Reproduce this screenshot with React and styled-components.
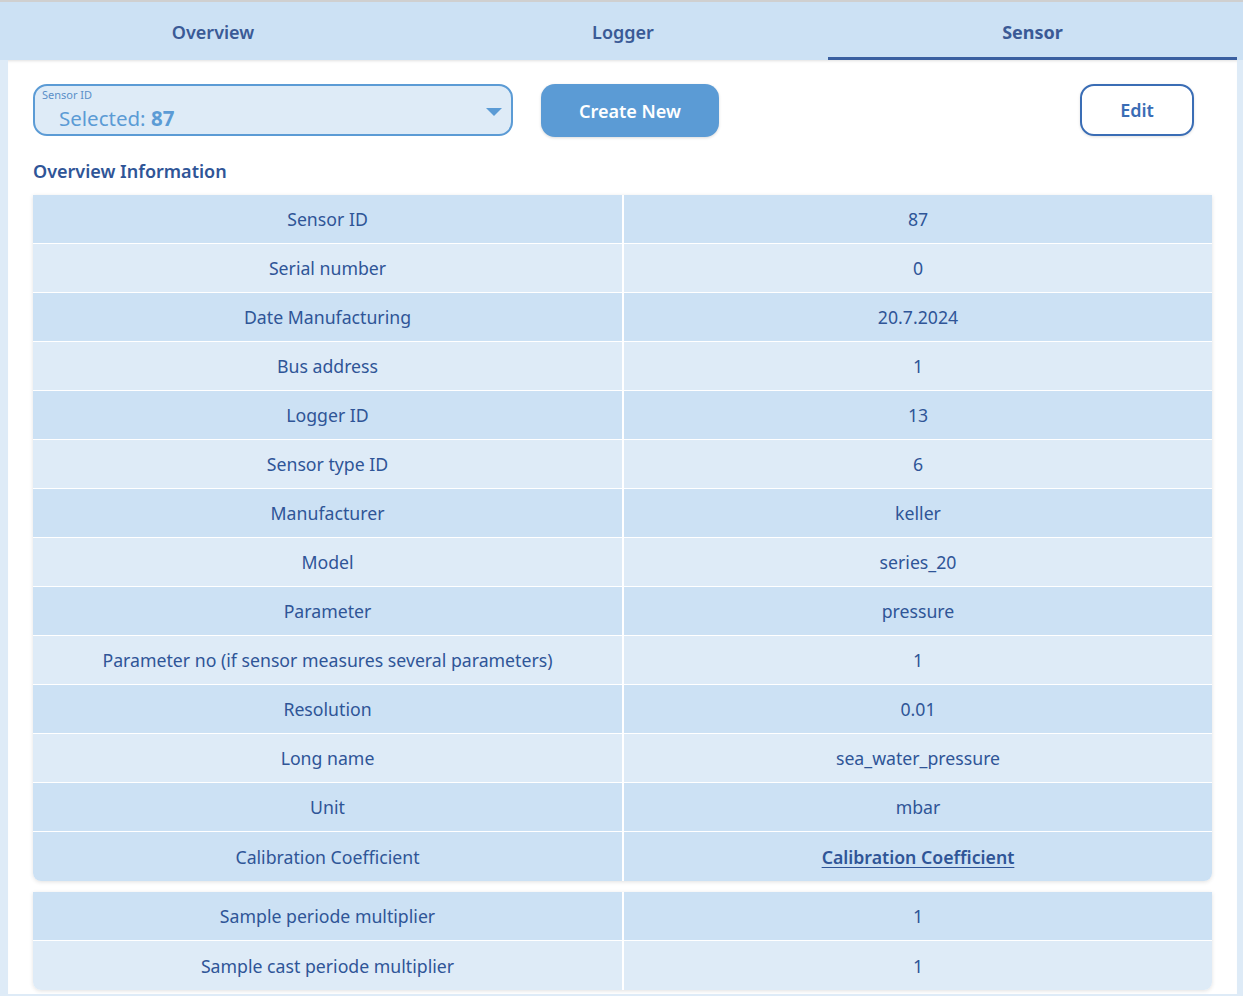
import React from "react";
import styled, { createGlobalStyle } from "styled-components";

const Global = createGlobalStyle`
  html, body { margin: 0; padding: 0; background: #deebf7; }
  body { font-family: "Noto Sans", "Open Sans", sans-serif; }
  * { box-sizing: border-box; }
`;

const Page = styled.div`
  border-top: 2px solid #cfcfcf;
  width: 1243px;
  height: 994px;
  overflow: hidden;
  background: #deebf7;
`;

const TabBar = styled.div`
  height: 58px;
  background: #cce1f4;
  display: grid;
  grid-template-columns: 410px 410px 409px;
  padding: 0 6px 0 8px;
`;

const Tab = styled.div`
  display: flex;
  align-items: center;
  justify-content: center;
  font-size: 18px;
  font-weight: ${(p) => (p.$active ? 700 : 600)};
  color: #3a5a96;
  border-bottom: 3px solid ${(p) => (p.$active ? "#3a5fa0" : "transparent")};
  padding-top: 5px;
`;

const Panel = styled.div`
  margin: 0 6px 0 8px;
  background: #fff;
  box-shadow: inset 0 3px 3px -2px rgba(0, 0, 0, 0.12);
  padding: 24px 25px 0 25px;
  height: 936px;
`;

const Toolbar = styled.div`
  display: flex;
  align-items: flex-start;
  gap: 28px;
  padding-right: 18px;
`;

const SelectBox = styled.div`
  position: relative;
  width: 480px;
  height: 52px;
  border: 2px solid #5b9bd5;
  border-radius: 14px;
  background: #deebf7;
  display: flex;
  align-items: flex-end;
  padding: 0 0 2px 24px;
`;

const SelectLabel = styled.span`
  position: absolute;
  left: 7px;
  top: 1px;
  font-size: 11px;
  color: #5b8fc8;
`;

const SelectValue = styled.span`
  font-size: 20.5px;
  color: #5b9bd5;
  b { font-weight: 700; }
`;

const Caret = styled.span`
  position: absolute;
  right: 9px;
  top: 22px;
  width: 0;
  height: 0;
  border-left: 8px solid transparent;
  border-right: 8px solid transparent;
  border-top: 8px solid #5b9bd5;
`;

const Button = styled.button`
  height: 53px;
  border-radius: 14px;
  font-family: inherit;
  font-size: 18px;
  font-weight: 600;
  cursor: pointer;
  padding: 0;
  width: ${(p) => p.$w}px;
  ${(p) =>
    p.$primary
      ? `background:#5b9bd5;color:#fff;border:none;box-shadow:0 1px 3px rgba(0,0,0,0.15);`
      : `background:#fff;color:#3a6db5;border:2px solid #3a6db5;height:52px;box-shadow:0 1px 3px rgba(0,0,0,0.12);`}
`;

const Spacer = styled.div`
  flex: 1;
`;

const SectionTitle = styled.h2`
  margin: 21px 0 11px 0;
  font-size: 18px;
  font-weight: 600;
  color: #2f5597;
  line-height: 26px;
`;

const Table = styled.div`
  width: 1179px;
  border-radius: 0 0 8px 8px;
  overflow: hidden;
  box-shadow: 0 1px 4px rgba(0, 0, 0, 0.12);
  margin-bottom: ${(p) => p.$mb || 0}px;
  display: grid;
  grid-template-columns: 591px 588px;
`;

const Cell = styled.div`
  height: 49px;
  display: flex;
  align-items: center;
  justify-content: center;
  font-size: 17.7px;
  color: #2f5597;
  background: ${(p) => (p.$odd ? "#deebf7" : "#cce1f4")};
  border-bottom: ${(p) => (p.$last ? "none" : "1.5px solid #fff")};
  border-right: ${(p) => (p.$left ? "2px solid #fff" : "none")};
`;

const Link = styled.a`
  font-weight: 600;
  color: #2f5597;
  text-decoration: underline;
  text-underline-offset: 3px;
`;

const rows1 = [
  ["Sensor ID", "87"],
  ["Serial number", "0"],
  ["Date Manufacturing", "20.7.2024"],
  ["Bus address", "1"],
  ["Logger ID", "13"],
  ["Sensor type ID", "6"],
  ["Manufacturer", "keller"],
  ["Model", "series_20"],
  ["Parameter", "pressure"],
  ["Parameter no (if sensor measures several parameters)", "1"],
  ["Resolution", "0.01"],
  ["Long name", "sea_water_pressure"],
  ["Unit", "mbar"],
  ["Calibration Coefficient", null],
];

const rows2 = [
  ["Sample periode multiplier", "1"],
  ["Sample cast periode multiplier", "1"],
];

function DataTable({ rows, mb, lastDark }) {
  return (
    <Table $mb={mb}>
      {rows.map(([k, v], i) => {
        const odd = i % 2 === 1 && !(lastDark && i === rows.length - 1);
        const last = i === rows.length - 1;
        return (
          <React.Fragment key={k}>
            <Cell $odd={odd} $last={last} $left>
              {k}
            </Cell>
            <Cell $odd={odd} $last={last}>
              {v === null ? <Link href="#">Calibration Coefficient</Link> : v}
            </Cell>
          </React.Fragment>
        );
      })}
    </Table>
  );
}

export default function App() {
  return (
    <>
      <Global />
      <Page>
        <TabBar>
          <Tab>Overview</Tab>
          <Tab>Logger</Tab>
          <Tab $active>Sensor</Tab>
        </TabBar>
        <Panel>
          <Toolbar>
            <SelectBox>
              <SelectLabel>Sensor ID</SelectLabel>
              <SelectValue>
                Selected: <b>87</b>
              </SelectValue>
              <Caret />
            </SelectBox>
            <Button $primary $w={178}>Create New</Button>
            <Spacer />
            <Button $w={114}>Edit</Button>
          </Toolbar>
          <SectionTitle>Overview Information</SectionTitle>
          <DataTable rows={rows1} mb={11} lastDark />
          <DataTable rows={rows2} />
        </Panel>
      </Page>
    </>
  );
}
